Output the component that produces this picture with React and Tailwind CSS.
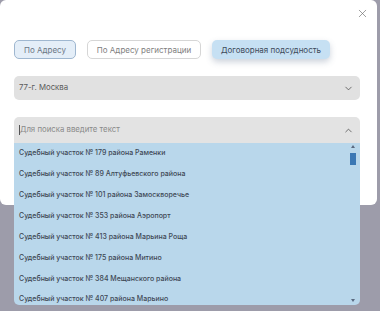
import { X, ChevronDown, ChevronUp } from "lucide-react";

const COURTS = [
  "Судебный участок № 179 района Раменки",
  "Судебный участок № 89 Алтуфьевского района",
  "Судебный участок № 101 района Замоскворечье",
  "Судебный участок № 353 района Аэропорт",
  "Судебный участок № 413 района Марьина Роща",
  "Судебный участок № 175 района Митино",
  "Судебный участок № 384 Мещанского района",
  "Судебный участок № 407 района Марьино",
];

const App = () => {
  return (
    <div
      className="relative w-[380px] h-[311px] overflow-hidden bg-[#9d9caa]"
      style={{ fontFamily: "Inter, 'Noto Sans', sans-serif" }}
    >
      {/* ── Modal ── */}
      <div className="w-[377px] h-[205px] bg-white rounded-[6px] pt-[7px]">
        <div className="flex justify-end pr-[8px]">
          <X size={13} strokeWidth={1.2} className="text-[#6a6a6a]" />
        </div>

        {/* ── Mode tabs ── */}
        <div className="flex gap-[11px] ml-[14px] mt-[20px]">
          <button className="w-[62px] h-[19px] rounded-[5px] border border-[#9fb7d0] bg-[#e4eef8] text-[8px] text-[#6b7684]">
            По Адресу
          </button>
          <button className="w-[114px] h-[19px] rounded-[5px] border border-[#d6d6d6] bg-white text-[8px] text-[#808080]">
            По Адресу регистрации
          </button>
          <button className="w-[118px] h-[19px] rounded-[5px] bg-[#c6e0f3] text-[8px] text-[#3d4a5a] shadow-[0_3px_6px_rgba(90,110,140,0.3)]">
            Договорная подсудность
          </button>
        </div>

        {/* ── Region select ── */}
        <div className="flex items-center justify-between ml-[14px] mt-[17px] w-[346px] h-[24px] rounded-[5px] bg-[#e1e1e1] pl-[5px] pr-[6px]">
          <span className="text-[7.8px] text-[#5a5a5a]">77-г. Москва</span>
          <ChevronDown size={11} strokeWidth={1.6} className="text-[#444]" />
        </div>

        {/* ── Search ── */}
        <div className="flex items-center justify-between ml-[14px] mt-[17px] w-[346px] h-[26px] rounded-t-[5px] bg-[#e3e3e3] pl-[5px] pr-[6px]">
          <div className="flex items-center">
            <span className="w-px h-[10px] bg-[#555]" />
            <span className="text-[7.8px] text-[#8a8a8a]">Для поиска введите текст</span>
          </div>
          <ChevronUp size={11} strokeWidth={1.6} className="text-[#444]" />
        </div>
      </div>

      {/* ── Dropdown list (over the modal edge) ── */}
      <div className="absolute left-[14px] top-[143px] w-[346px] h-[162px] bg-[#b9d7eb] rounded-b-[5px] overflow-hidden">
        {COURTS.map((c) => (
          <div key={c} className="h-[20.9px] flex items-center pl-[5px] text-[7px] font-medium text-[#3e4855]">
            {c}
          </div>
        ))}
        <div className="absolute right-[4px] top-[2px] bottom-[3px] w-[6px] flex flex-col items-center">
          <div className="w-0 h-0 border-l-[2px] border-r-[2px] border-b-[3px] border-l-transparent border-r-transparent border-b-[#5a6a80]" />
          <div className="mt-[5px] w-[6px] h-[12px] bg-[#3c78b4]" />
          <div className="flex-1" />
          <div className="w-0 h-0 border-l-[2px] border-r-[2px] border-t-[3px] border-l-transparent border-r-transparent border-t-[#5a6a80]" />
        </div>
      </div>
    </div>
  );
};

export default App;
